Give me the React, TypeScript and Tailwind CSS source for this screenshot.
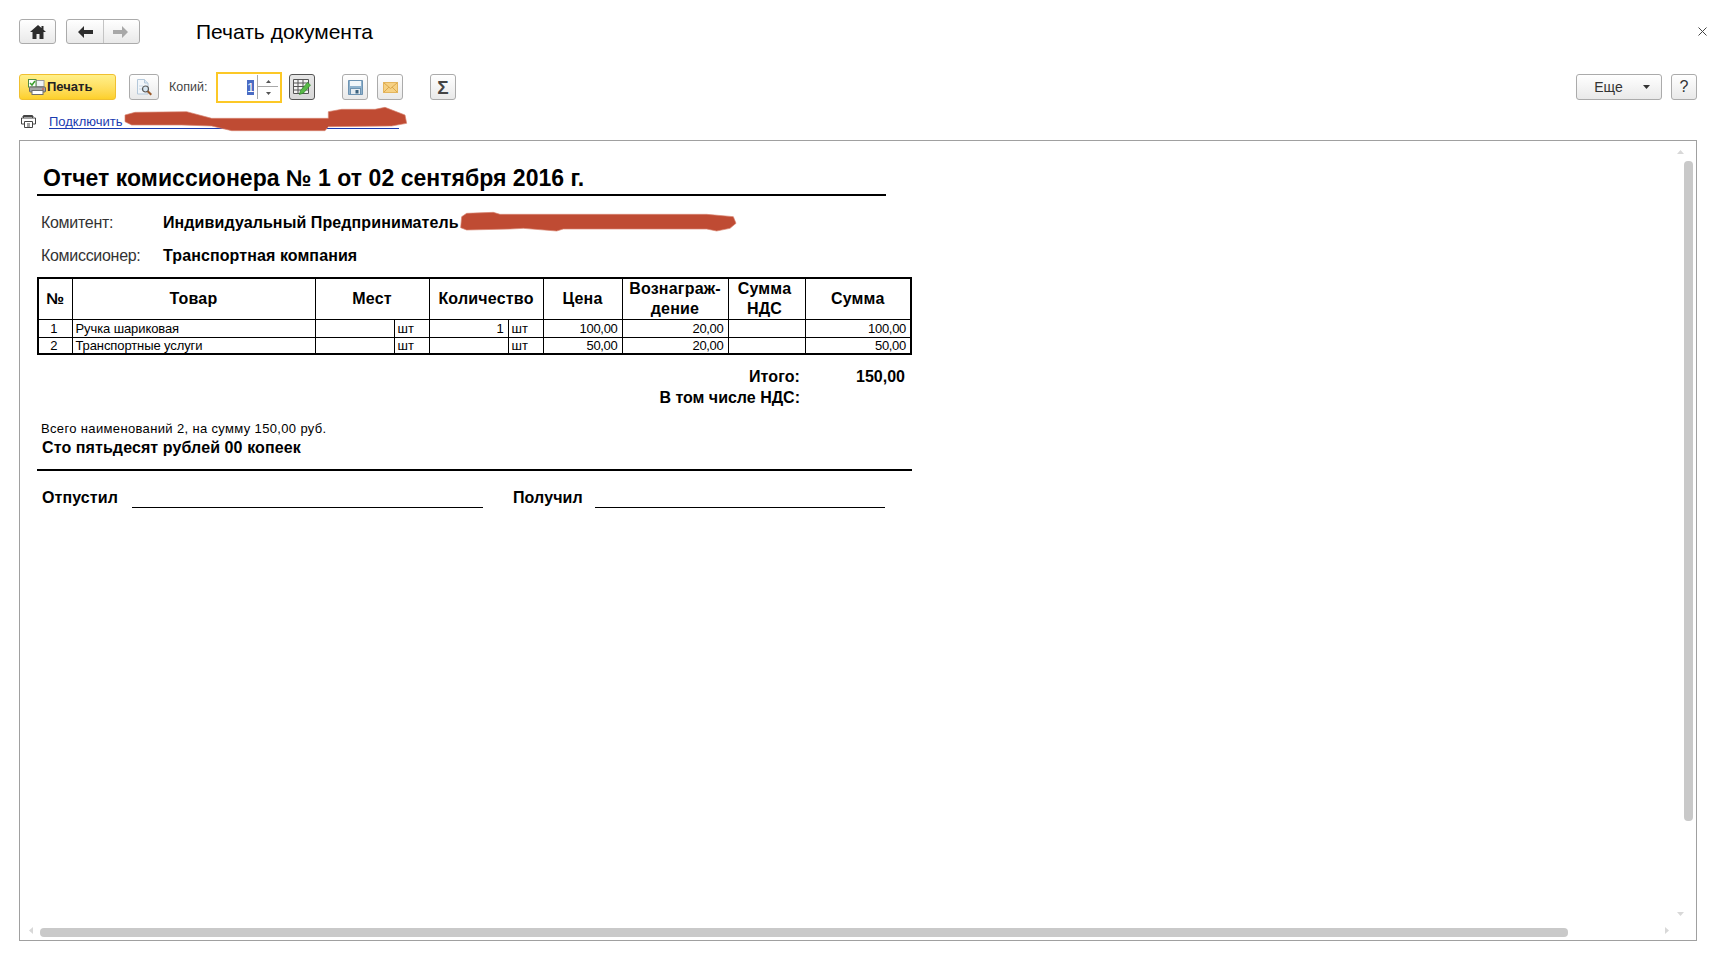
import React from "react";

const btn = "flex items-center justify-center border border-[#ababab] rounded-[3px] bg-linear-to-b from-white to-[#e9e9e9]";

function PrintIcon() {
  return (
    <svg width="18" height="16" viewBox="0 0 18 16">
      <rect x="8" y="1.5" width="8" height="6" fill="#eef2f5" stroke="#9a9a9a" />
      <rect x=".5" y=".5" width="7.5" height="7.5" fill="#fff" stroke="#4f8a42" />
      <path d="M2 4l2 2 3-4" fill="none" stroke="#39a02c" strokeWidth="1.5" />
      <rect x="1.5" y="8" width="16" height="5" rx="1" fill="#a5a5a5" stroke="#666" />
      <rect x="4" y="11.5" width="11" height="4" fill="#fff" stroke="#6f6f6f" />
      <rect x="14" y="9.5" width="2" height="1" fill="#d9442c" />
    </svg>
  );
}

function PreviewIcon() {
  return (
    <svg width="17" height="17" viewBox="0 0 17 17">
      <path d="M1.5.5h7l3.5 3.5v11h-10.500z" fill="#f2f6fa" stroke="#b4c8da" />
      <path d="M8.500.5V4H12" fill="#dce7f1" stroke="#b4c8da" />
      <path d="M3 7h4M3 10h3" stroke="#c8d8e6" />
      <circle cx="9.500" cy="10" r="3" fill="#d6e6f2" stroke="#5a5a5a" strokeWidth="1.2" />
      <path d="M11.800 12.300l3.500 3.500" stroke="#9a5a2a" strokeWidth="2" />
    </svg>
  );
}

function TableEditIcon() {
  return (
    <svg width="18" height="16" viewBox="0 0 18 16">
      <path d="M.5.5h15v14H.5zM.5 4h15M.5 7.500h15M.5 11h15M5 .5v14M10 .5v14" fill="#f4f4f4" stroke="#555" />
      <path d="M6.500 15.500l1-4 7-8 3 2.500-7 8z" fill="#58b947" stroke="#2f8a2a" strokeWidth=".7" />
    </svg>
  );
}

function SaveIcon() {
  return (
    <svg width="15" height="15" viewBox="0 0 15 15">
      <path d="M.5.5h14v14H.5z" fill="#8fb2cd" stroke="#6d93b2" />
      <rect x="2" y="1" width="11" height="5" fill="#f1f6fa" />
      <rect x="2.500" y="8.500" width="10" height="6" fill="#e6ecf1" stroke="#6d93b2" />
      <rect x="7.500" y="10" width="3" height="3.500" fill="#3c627e" />
    </svg>
  );
}

function MailIcon() {
  return (
    <svg width="15" height="11" viewBox="0 0 15 11">
      <rect x=".5" y=".5" width="14" height="10" fill="#f6d184" stroke="#e4b55d" />
      <path d="M1 1l6.500 5.500L14 1M1 10l5-5M14 10L9 5" fill="none" stroke="#dba94e" />
    </svg>
  );
}

function Scribble({ d, className }: { d: string; className: string }) {
  return (
    <svg className={className} width="300" height="35" viewBox="0 0 900 105">
      <path d={d} fill="#bf4b33" stroke="#d8846f" strokeWidth="2" />
    </svg>
  );
}

export default function App() {
  const sans = "font-['Liberation_Sans',Arial,sans-serif]";
  const th = "border border-black p-0 text-center font-bold text-[16px] leading-[19.5px] tracking-[0.2px]";
  const td = "border border-black p-0 text-[13px] leading-none font-normal";
  const num = `${td} pr-[4px] text-right tracking-[-0.3px]`;
  const rows = [
    { n: "1", name: "Ручка шариковая", qty: "1", price: "100,00", fee: "20,00", sum: "100,00", h: "h-[18px]" },
    { n: "2", name: "Транспортные услуги", qty: "", price: "50,00", fee: "20,00", sum: "50,00", h: "h-[17px]" },
  ];
  return (
    <div className={`${sans} relative h-[955px] w-[1723px] bg-white pl-[19px] pr-[26px] pt-[19px] text-black overflow-hidden`}>
      <header className="flex h-[25px] items-center">
        <button className={`${btn} h-[25px] w-[37px]`}>
          <svg width="16" height="14" viewBox="0 0 16 14"><path d="M8 0L0 7h2.500v7h4V9h3v5h4V7H16l-2.500-2.200V1h-2v2z" fill="#2d2d2d" /></svg>
        </button>
        <div className={`${btn} ml-[10px] h-[25px] w-[74px]`}>
          <span className="flex h-full w-[37px] items-center justify-center border-r border-[#c4c4c4]">
            <svg width="15" height="12" viewBox="0 0 15 12"><path d="M0 6l6-6v4h9v4H6v4z" fill="#2d2d2d" /></svg>
          </span>
          <span className="flex h-full flex-1 items-center justify-center pr-[2px]">
            <svg width="15" height="12" viewBox="0 0 15 12"><path d="M15 6L9 0v4H0v4h9v4z" fill="#a8a8a8" /></svg>
          </span>
        </div>
        <h1 className="ml-[56px] text-[21px] leading-none font-normal">Печать документа</h1>
        <span className="ml-auto mr-[-11px] flex w-[12px] justify-center">
          <svg width="9" height="9" viewBox="0 0 9 9"><path d="M.5.5l8 8M8.500.5l-8 8" stroke="#444" strokeWidth="1" /></svg>
        </span>
      </header>

      <div className="mt-[30px] flex h-[26px] items-center">
        <button className="flex h-[26px] w-[97px] items-center rounded-[3px] border border-[#f0c030] bg-linear-to-b from-[#fff08a] to-[#fdd028] pl-[8px]">
          <PrintIcon />
          <span className="ml-px text-[13px] font-bold text-[#222]">Печать</span>
        </button>
        <button className={`${btn} ml-[13px] h-[26px] w-[30px]`}><PreviewIcon /></button>
        <span className="ml-[10px] w-[47px] text-[12.5px] text-[#444]">Копий:</span>
        <div className="flex h-[31px] w-[66px] items-center border-2 border-[#fcc826] bg-white">
          <span className="ml-[29px] h-[15px] w-[7px] bg-[#4a6cc4] text-center text-[13px] leading-[15px] text-white">1</span>
          <div className="relative ml-[3px] h-[24px] w-[21px] border-l border-[#a8a8a8]">
            <div className="absolute left-0 right-0 top-[11px] h-px bg-[#a8a8a8]" />
            <svg className="absolute left-[8px] top-[5px]" width="5" height="3" viewBox="0 0 5 3"><path d="M2.500 0L5 3H0z" fill="#555" /></svg>
            <svg className="absolute left-[8px] top-[17px]" width="5" height="3" viewBox="0 0 5 3"><path d="M2.500 3L5 0H0z" fill="#555" /></svg>
          </div>
        </div>
        <button className="ml-[7px] flex h-[26px] w-[26px] items-center justify-center rounded-[3px] border border-[#555] bg-linear-to-b from-[#e6e6e6] to-[#d8d8d8]"><TableEditIcon /></button>
        <button className={`${btn} ml-[27px] h-[26px] w-[26px]`}><SaveIcon /></button>
        <button className={`${btn} ml-[9px] h-[26px] w-[26px]`}><MailIcon /></button>
        <button className={`${btn} ml-[27px] h-[26px] w-[26px] text-[19px] leading-none font-bold text-[#444]`}>Σ</button>
        <button className={`${btn} ml-auto h-[26px] w-[86px] text-[14px] text-[#333]`}>
          <span className="ml-[6px]">Еще</span>
          <svg className="ml-[20px]" width="7" height="4" viewBox="0 0 7 4"><path d="M0 0h7L3.500 4z" fill="#333" /></svg>
        </button>
        <button className={`${btn} ml-[9px] h-[26px] w-[26px] text-[16px] text-[#333]`}>?</button>
      </div>

      <div className="relative mt-[15px] flex h-[13px] items-center">
        <svg className="ml-[2px]" width="15" height="13" viewBox="0 0 15 13" fill="none" stroke="#444">
          <path d="M2.500 3V.5h9V3M.5 3h14v6h-3M3.500 9h-3V3M1.500 1.500h11" />
          <path d="M3.500 6.500h8v6h-8zM6 9h3M6 11h3" />
        </svg>
        <span className="ml-[13px] h-[14px] w-[350px] border-b border-[#1a3bb0] text-[13px] leading-[13px] text-[#1a3bb0]">Подключить</span>
        <Scribble
          className="absolute left-[96px] top-[-15px]"
          d="M30 45L60 37L215 35L290 55L640 55L640 35L680 28L780 28L810 22L870 45L875 70L830 78L640 80L630 92L350 92L290 78L200 75L50 75L30 65Z"
        />
      </div>

      <main className="relative mt-[12px] h-[801px] w-[1678px] overflow-hidden border border-[#a0a0a0] pl-[17px]">
        <div className="w-[849px] border-b-2 border-black pt-[24px] pb-[3px] pl-[6px]">
          <h2 className="text-[23px] leading-[26px] font-bold tracking-[0.03px]">Отчет комиссионера № 1 от 02 сентября 2016 г.</h2>
        </div>

        <div className="relative mt-[17px] flex h-[20px] items-center pl-[4px] text-[16px]">
          <span className="w-[122px] tracking-[-0.3px] text-[#333]">Комитент:</span>
          <span className="font-bold tracking-[0.1px]">Индивидуальный Предприниматель</span>
          <Scribble
            className="absolute left-[413px] top-[-8px]"
            d="M35 35L50 25L130 22L150 28L770 28L850 35L858 55L840 70L800 78L770 72L340 72L320 78L220 70L180 72L50 75L32 68Z"
          />
        </div>
        <div className="mt-[13px] flex h-[20px] items-center pl-[4px] text-[16px]">
          <span className="w-[122px] tracking-[-0.3px] text-[#333]">Комиссионер:</span>
          <span className="font-bold tracking-[0.1px]">Транспортная компания</span>
        </div>

        <table className="mt-[11px] w-[873px] table-fixed border-collapse border-2 border-black">
          <colgroup>
            <col className="w-[34px]" />
            <col className="w-[243px]" />
            <col className="w-[79px]" />
            <col className="w-[35px]" />
            <col className="w-[79px]" />
            <col className="w-[35px]" />
            <col className="w-[79px]" />
            <col className="w-[106px]" />
            <col className="w-[77px]" />
            <col className="w-[106px]" />
          </colgroup>
          <thead>
            <tr className="h-[41px]">
              <th className={th}>№</th>
              <th className={th}>Товар</th>
              <th className={th} colSpan={2}>Мест</th>
              <th className={th} colSpan={2}>Количество</th>
              <th className={th}>Цена</th>
              <th className={th}>Вознаграж-<br />дение</th>
              <th className={`${th} pr-[4px]`}>Сумма<br />НДС</th>
              <th className={th}>Сумма</th>
            </tr>
          </thead>
          <tbody>
            {rows.map((r) => (
              <tr key={r.n} className={r.h}>
                <td className={`${td} pr-[3px] text-center`}>{r.n}</td>
                <td className={`${td} pl-[3px] tracking-[-0.1px]`}>{r.name}</td>
                <td className={td} />
                <td className={`${td} pl-[3px]`}>шт</td>
                <td className={num}>{r.qty}</td>
                <td className={`${td} pl-[3px]`}>шт</td>
                <td className={num}>{r.price}</td>
                <td className={num}>{r.fee}</td>
                <td className={td} />
                <td className={num}>{r.sum}</td>
              </tr>
            ))}
          </tbody>
        </table>

        <div className="mt-[12px] flex h-[20px] w-[868px] items-center text-[16px] font-bold">
          <span className="w-[763px] text-right tracking-[0.1px]">Итого:</span>
          <span className="flex-1 text-right">150,00</span>
        </div>
        <div className="flex h-[22px] w-[763px] items-center justify-end text-[16px] font-bold">В том числе НДС:</div>

        <div className="mt-[12px] h-[16px] pl-[4px] text-[13px] leading-[16px] tracking-[0.35px]">Всего наименований 2, на сумму 150,00 руб.</div>
        <div className="mt-[2px] h-[18px] pl-[5px] text-[16px] leading-[18px] font-bold tracking-[0.1px]">Сто пятьдесят рублей 00 копеек</div>
        <div className="mt-[12px] h-[2px] w-[875px] bg-black" />

        <div className="mt-[16px] flex h-[21px] items-end pl-[5px] text-[16px] font-bold tracking-[0.1px]">
          <span className="h-[21px] w-[90px] leading-[22px]">Отпустил</span>
          <span className="h-px w-[351px] bg-black" />
          <span className="ml-[30px] h-[21px] w-[82px] leading-[22px]">Получил</span>
          <span className="h-px w-[290px] bg-black" />
        </div>

        <svg className="absolute right-[12px] top-[9px]" width="7" height="4" viewBox="0 0 7 4"><path d="M3.500 0L7 4H0z" fill="#d8d8d8" /></svg>
        <div className="absolute right-[3px] top-[20px] h-[660px] w-[9px] rounded-[4px] bg-[#c9c9c9]" />
        <svg className="absolute right-[12px] bottom-[24px]" width="7" height="4" viewBox="0 0 7 4"><path d="M3.500 4L7 0H0z" fill="#d8d8d8" /></svg>
        <svg className="absolute left-[9px] bottom-[6px]" width="4" height="7" viewBox="0 0 4 7"><path d="M0 3.500L4 0v7z" fill="#d8d8d8" /></svg>
        <div className="absolute bottom-[3px] left-[20px] h-[9px] w-[1528px] rounded-[4px] bg-[#c9c9c9]" />
        <svg className="absolute right-[27px] bottom-[6px]" width="4" height="7" viewBox="0 0 4 7"><path d="M4 3.500L0 0v7z" fill="#d8d8d8" /></svg>
      </main>
    </div>
  );
}
